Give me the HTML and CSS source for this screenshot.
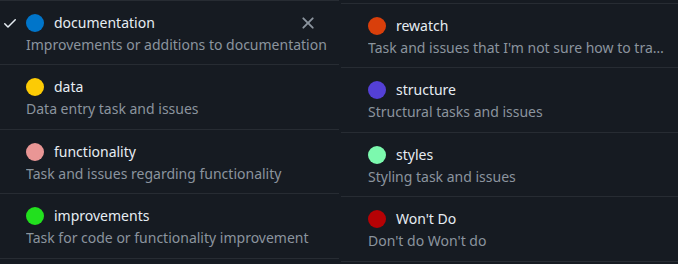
FILE: index.html
```html
<!DOCTYPE html>
<html lang="en">
<head>
    <meta charset="UTF-8">
    <title>Labels</title>
    <link rel="stylesheet" href="styles.css">
</head>
<body>
    <div class="wrap">
        <ul class="menu menu-left">
            <li class="item">
                <span class="check">
                    <svg width="16" height="16" viewBox="0 0 16 16"><path d="M13.78 4.22a.75.75 0 0 1 0 1.06l-7.25 7.250a.75.75 0 0 1-1.06 0L2.22 9.28a.751.751 0 0 1 .018-1.042.751.751 0 0 1 1.042-.018L6 10.94l6.72-6.72a.75.75 0 0 1 1.06 0Z"/></svg>
                </span>
                <div class="body">
                    <div class="head">
                        <span class="dot" style="background:#0075ca"></span>
                        <span class="name">documentation</span>
                        <svg class="close" width="20" height="20" viewBox="0 0 16 16"><path d="M3.72 3.72a.75.75 0 0 1 1.06 0L8 6.94l3.22-3.22a.749.749 0 0 1 1.275.326.749.749 0 0 1-.215.734L9.06 8l3.22 3.22a.749.749 0 0 1-.326 1.275.749.749 0 0 1-.734-.215L8 9.06l-3.22 3.22a.751.751 0 0 1-1.042-.018.751.751 0 0 1-.018-1.042L6.94 8 3.72 4.78a.75.75 0 0 1 0-1.06Z"/></svg>
                    </div>
                    <div class="desc">Improvements or additions to documentation</div>
                </div>
            </li>
            <li class="item">
                <span class="check"></span>
                <div class="body">
                    <div class="head">
                        <span class="dot" style="background:#fccb05"></span>
                        <span class="name">data</span>
                    </div>
                    <div class="desc">Data entry task and issues</div>
                </div>
            </li>
            <li class="item">
                <span class="check"></span>
                <div class="body">
                    <div class="head">
                        <span class="dot" style="background:#e99695"></span>
                        <span class="name">functionality</span>
                    </div>
                    <div class="desc">Task and issues regarding functionality</div>
                </div>
            </li>
            <li class="item">
                <span class="check"></span>
                <div class="body">
                    <div class="head">
                        <span class="dot" style="background:#22e01e"></span>
                        <span class="name">improvements</span>
                    </div>
                    <div class="desc">Task for code or functionality improvement</div>
                </div>
            </li>
        </ul>
        <ul class="menu menu-right">
            <li class="item">
                <span class="check"></span>
                <div class="body">
                    <div class="head">
                        <span class="dot" style="background:#d93f0b"></span>
                        <span class="name">rewatch</span>
                    </div>
                    <div class="desc">Task and issues that I'm not sure how to track and need to rewatch</div>
                </div>
            </li>
            <li class="item">
                <span class="check"></span>
                <div class="body">
                    <div class="head">
                        <span class="dot" style="background:#5440d6"></span>
                        <span class="name">structure</span>
                    </div>
                    <div class="desc">Structural tasks and issues</div>
                </div>
            </li>
            <li class="item">
                <span class="check"></span>
                <div class="body">
                    <div class="head">
                        <span class="dot" style="background:#7cf9ae"></span>
                        <span class="name">styles</span>
                    </div>
                    <div class="desc">Styling task and issues</div>
                </div>
            </li>
            <li class="item">
                <span class="check"></span>
                <div class="body">
                    <div class="head">
                        <span class="dot" style="background:#b60205"></span>
                        <span class="name">Won't Do</span>
                    </div>
                    <div class="desc">Don't do Won't do</div>
                </div>
            </li>
        </ul>
    </div>
</body>
</html>
```

FILE: styles.css
```css
*{margin: 0;padding: 0;box-sizing: border-box}
html, body{
    height: 100%;
    background-color: #161b22;
    overflow: hidden;
}
body{
    font-family: "Noto Sans", "Liberation Sans", sans-serif;
    font-size: 14px;
    color: #e6edf3;
}
.wrap{
    display: flex;
    gap: 2px;
}
.menu{
    list-style: none;
    border-top: 1px solid #272c33;
}
.menu-left{
    width: 339px;
}
.menu-right{
    flex: 1;
    min-width: 0;
    margin-top: 3px;
}
.item{
    display: flex;
    height: 64.4px;
    padding-top: 12px;
    border-bottom: 1px solid #272c33;
}
.check{
    flex: none;
    width: 26px;
    padding: 2px 0 0 2px;
    fill: #e6edf3;
}
.menu-right .check{
    width: 27px;
}
.body{
    flex: 1;
    min-width: 0;
    padding-right: 14px;
}
.menu-left .body{
    padding-right: 10px;
}
.head{
    display: flex;
    align-items: center;
    height: 20px;
}
.dot{
    flex: none;
    width: 18px;
    height: 18px;
    border-radius: 50%;
    margin-right: 10px;
}
.name{
    line-height: 20px;
}
.close{
    margin-left: auto;
    margin-right: 11px;
    fill: #8b949e;
}
.desc{
    margin-top: 2px;
    line-height: 20px;
    color: #8b949e;
    white-space: nowrap;
    overflow: hidden;
    text-overflow: ellipsis;
}
```
